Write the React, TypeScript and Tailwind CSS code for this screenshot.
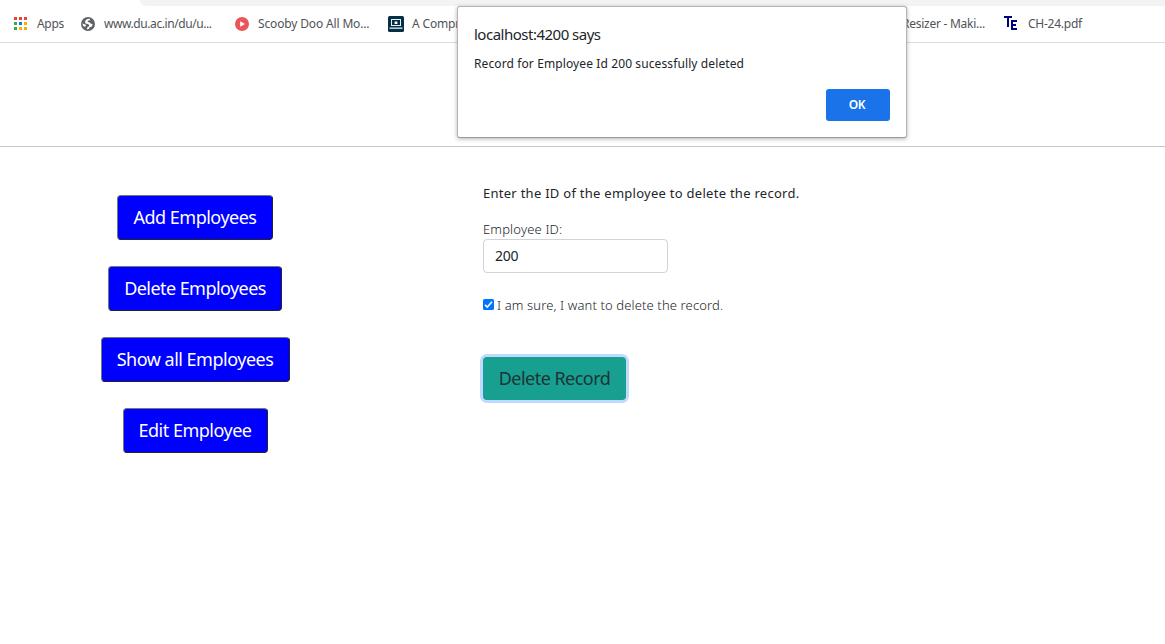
import React from 'react';

const appDots = [
  '#ea4335', '#ea4335', '#ea4335',
  '#34a853', '#1a73e8', '#fbac05',
  '#34a853', '#fbac05', '#fbac05',
];

function AppsIcon() {
  return (
    <svg className="shrink-0" width="14" height="14" viewBox="0 0 14 14" shapeRendering="crispEdges">
      {appDots.map((c, i) => (
        <rect key={i} x={(i % 3) * 5} y={Math.floor(i / 3) * 5} width="3" height="3" fill={c} />
      ))}
    </svg>
  );
}

function GlobeIcon() {
  return (
    <svg className="shrink-0" width="14" height="14" viewBox="0 0 14 14">
      <circle cx="7" cy="7" r="7" fill="#5f6368" />
      <path d="M9.2 1.8 8.8 3.2 7 3.8 6.6 5.1 8.6 5.4 10 6.8 11.8 7.2 10.6 9.8 8.6 10.2 7.8 12 5.8 12.3 6.2 10.4 8 9.2 8.2 7.8 6.6 7 4.6 6.6 4 5 4.6 3.2 6.4 1.9z" fill="#fff" />
      <path d="M1.4 6.4 4.4 7.6 5 8.8 4.2 9.8 2.2 9z" fill="#fff" />
    </svg>
  );
}

function PlayIcon() {
  return (
    <svg className="shrink-0" width="14" height="14" viewBox="0 0 14 14">
      <circle cx="7" cy="7" r="7" fill="#e9565a" />
      <path d="M5.2 4.2v5.6L10 7z" fill="#fff" />
    </svg>
  );
}

function LaptopIcon() {
  return (
    <svg className="shrink-0" width="16" height="16" viewBox="0 0 16 16">
      <rect width="16" height="16" rx="1.5" fill="#062f46" />
      <rect x="3.5" y="3.5" width="9" height="6" fill="none" stroke="#e6eef2" />
      <rect x="6.6" y="5.4" width="2.8" height="2.6" rx="0.6" fill="#fff" />
      <path d="M1.5 11.5h13v1.3h-13z" fill="#e6eef2" />
    </svg>
  );
}

function TeLogo() {
  return (
    <svg className="mb-[2px] shrink-0" width="14" height="14" viewBox="0 0 14 14" fill="#000080" shapeRendering="crispEdges">
      <path d="M0 0h8v2H5v9H3V2H0z" />
      <path d="M7 4h6v2H9v2h3v2H9v2h4v2H7z" />
    </svg>
  );
}

function SideButton({ label, className }: { label: string; className: string }) {
  return (
    <button
      className={`flex h-[45px] items-center justify-center whitespace-nowrap rounded border border-t-[#767676] border-l-[#767676] border-r-[#212529] border-b-[#212529] bg-[#0000ff] pb-px text-[18px] text-white ${className}`}
    >
      {label}
    </button>
  );
}

export default function App() {
  return (
    <div className="relative h-[644px] w-[1165px] overflow-hidden bg-white font-['Noto_Sans',sans-serif] text-[#212529]">
      <div className="h-[6px] pl-[140px]">
        <div className="h-full rounded-bl-[8px] bg-[#f1f3f4]" />
      </div>
      <nav className="flex h-[37px] items-center border-b border-[#dadce0] pl-[14px] text-[12px] text-[#505357]">
        <div className="flex w-[67px] shrink-0 items-center gap-[9px] whitespace-nowrap"><AppsIcon /><span className="tracking-[-0.3px]">Apps</span></div>
        <div className="flex w-[154px] shrink-0 items-center gap-[9px] whitespace-nowrap"><GlobeIcon /><span className="tracking-[-0.42px]">www.du.ac.in/du/u...</span></div>
        <div className="flex w-[153px] shrink-0 items-center gap-[9px] whitespace-nowrap"><PlayIcon /><span className="tracking-[-0.15px]">Scooby Doo All Mo...</span></div>
        <div className="flex w-[100px] shrink-0 items-center gap-[8px] whitespace-nowrap"><LaptopIcon /><span className="tracking-[-0.15px]">A Compr</span></div>
        <div className="flex w-[497px] shrink-0 justify-end whitespace-nowrap"><span className="tracking-[-0.25px]">Resizer - Maki...</span></div>
        <div className="flex shrink-0 items-center gap-[10px] whitespace-nowrap pl-[19px]"><TeLogo /><span className="tracking-[-0.25px]">CH-24.pdf</span></div>
      </nav>
      <header className="h-[104px] border-b border-[#c6c6c6]" />
      <main className="flex">
        <aside className="flex w-[390px] flex-col items-center gap-[26px] pt-[48px]">
          <SideButton label="Add Employees" className="w-[156px] tracking-[-0.5px]" />
          <SideButton label="Delete Employees" className="w-[174px] tracking-[-0.56px]" />
          <SideButton label="Show all Employees" className="w-[189px] tracking-[-0.5px]" />
          <SideButton label="Edit Employee" className="w-[145px] tracking-[-0.5px]" />
        </aside>
        <section className="flex flex-col items-start whitespace-nowrap pl-[93px] pt-[36px]">
          <p className="h-[20px] text-[13px] leading-[20px] tracking-[0.27px]">Enter the ID of the employee to delete the record.</p>
          <label className="mt-[16px] h-[20px] text-[13px] font-light leading-[20px] tracking-[0.17px]">Employee ID:</label>
          <input
            defaultValue="200"
            className="h-[34px] w-[185px] rounded border border-[#ced4da] px-[11px] pb-[2px] text-[14px] tracking-[-0.3px] outline-none"
          />
          <label className="mt-[22px] flex h-[20px] items-center gap-[3px] text-[13px] font-light">
            <svg className="mb-[2px] shrink-0" width="11" height="11" viewBox="0 0 11 11">
              <rect width="11" height="11" rx="1.5" fill="#0075ff" />
              <path d="M2 5.8 4.3 8 9 2.8" fill="none" stroke="#fff" strokeWidth="1.6" />
            </svg>
            <span className="pt-[2px] tracking-[0.13px]">I am sure, I want to delete the record.</span>
          </label>
          <button className="mt-[42px] h-[43px] w-[143px] rounded bg-[#17a08f] text-[18px] tracking-[-0.52px] text-[#1c3438] ring-3 ring-[#bfd9ff]">
            Delete Record
          </button>
        </section>
      </main>
      <div
        role="dialog"
        className="absolute left-[457px] top-[6px] h-[132px] w-[450px] rounded-[3px] border border-[#b4b4b4] border-b-[#999] bg-white pl-[16px] pr-[16px] shadow-[0_1px_4px_rgba(0,0,0,0.3)]"
      >
        <h1 className="mt-[16px] h-[22px] text-[15px] leading-[22px] tracking-[-0.5px]">localhost:4200 says</h1>
        <p className="mt-[9px] h-[20px] text-[12px] leading-[20px] tracking-[0.11px]">Record for Employee Id 200 sucessfully deleted</p>
        <div className="mt-[15px] flex justify-end">
          <button className="h-[32px] w-[64px] rounded-[3px] bg-[#1a73e8] pr-[2px] text-[12px] font-semibold tracking-[-0.3px] text-white">OK</button>
        </div>
      </div>
    </div>
  );
}
